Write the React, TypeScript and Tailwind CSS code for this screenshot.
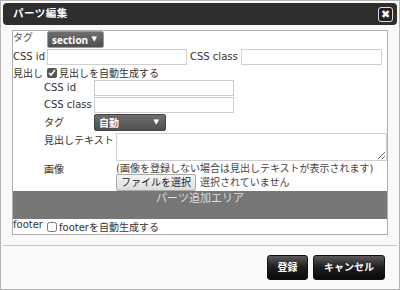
import React from 'react';

const font = { fontFamily: '"DejaVu Sans", "Noto Sans CJK JP", sans-serif' };

const DarkSelect: React.FC<{ label: string; width: string; focused?: boolean }> = ({ label, width, focused }) => (
  <div
    className={`${width} h-[17px] flex items-center justify-between pl-[4px] pr-[6px] rounded-[2px] bg-gradient-to-b from-[#6e6e6e] to-[#4f4f4f] text-white ${
      focused ? 'border border-[#7d9fd8]' : 'border border-[#444]'
    }`}
  >
    <span className="text-[10px] font-bold leading-none" style={{ fontFamily: '"Open Sans", "Noto Sans CJK JP", sans-serif' }}>
      {label}
    </span>
    <span className="text-[7px] leading-none">▼</span>
  </div>
);

const Input: React.FC<{ width: string }> = ({ width }) => (
  <input type="text" className={`${width} h-[16px] bg-white border border-[#cfcfcf] outline-none`} />
);

const App: React.FC = () => {
  return (
    <div className="w-[400px] h-[290px] bg-[#dcdcdc] overflow-hidden" style={font}>
      <div className="w-[400px] h-[290px] border border-[#b5b5b5] bg-[#f9f9f9] p-[2px] text-[#333] text-[10px]">
        {/* Title bar */}
        <div className="h-[22px] rounded-[4px] bg-[#2e2e2e] flex items-center justify-between pl-[10px] pr-[4px]">
          <span className="text-white font-bold text-[10.5px] tracking-[0.5px]">パーツ編集</span>
          <div className="w-[15px] h-[15px] rounded-[3px] border border-[#ddd] bg-[#222] flex items-center justify-center text-white font-bold text-[11px] leading-none">
            ✖
          </div>
        </div>

        {/* Form box */}
        <div className="mt-[5px] mx-[9px] border border-[#b0b0b0] bg-white leading-[13px]">
          <div className="flex h-[17px]">
            <span className="w-[34px] text-[#555]">タグ</span>
            <DarkSelect label="section" width="w-[57px]" focused />
          </div>
          <div className="flex h-[18px] items-start pt-[1px]">
            <span className="w-[34px] pt-[1px]">CSS id</span>
            <Input width="w-[140px]" />
            <span className="ml-[3px] w-[51px] pt-[1px]">CSS class</span>
            <Input width="w-[141px]" />
          </div>
          <div className="flex h-[14px] items-center">
            <span className="w-[34px]">見出し</span>
            <input type="checkbox" defaultChecked className="w-[10px] h-[10px] m-0 mr-[2px] accent-[#555]" />
            <span>見出しを自動生成する</span>
          </div>

          <div className="pl-[31px]">
            <div className="flex h-[17px] items-start">
              <span className="w-[50px] pt-[1px]">CSS id</span>
              <Input width="w-[140px]" />
            </div>
            <div className="flex h-[17px] items-start">
              <span className="w-[50px] pt-[1px]">CSS class</span>
              <Input width="w-[140px]" />
            </div>
            <div className="flex h-[18px] items-start">
              <span className="w-[50px] pt-[2px]">タグ</span>
              <DarkSelect label="自動" width="w-[72px]" />
            </div>
          </div>

          <div className="flex pl-[31px] mt-[1px]">
            <span className="w-[72px] pt-[1px]">見出しテキスト</span>
            <textarea className="flex-1 h-[28px] bg-white border border-[#cfcfcf] outline-none block" />
          </div>
          <div className="flex pl-[31px] mt-[2px]">
            <span className="w-[72px]">画像</span>
            <div className="flex flex-col">
              <span className="h-[11px] leading-[11px] text-[#444]">(画像を登録しない場合は見出しテキストが表示されます)</span>
              <div className="flex items-center h-[17px]">
                <div className="h-[17px] px-[4px] flex items-center border border-[#a9a9a9] rounded-[2px] bg-gradient-to-b from-[#f5f5f5] to-[#dcdcdc] text-[#222]">
                  ファイルを選択
                </div>
                <span className="ml-[4px] text-[#444]">選択されていません</span>
              </div>
            </div>
          </div>

          <div className="h-[28px] bg-[#777] text-[#ddd] text-center text-[11px] leading-[14px] pt-[1px]">パーツ追加エリア</div>

          <div className="flex h-[15px] items-start">
            <span className="w-[34px] leading-[12px]">footer</span>
            <input type="checkbox" className="w-[10px] h-[10px] m-0 mt-[3px] mr-[2px]" />
            <span className="pt-[2px]">footerを自動生成する</span>
          </div>
        </div>

        {/* Footer */}
        <div className="mt-[10px] border-t border-[#c4c4c4] flex justify-end gap-[5px] pt-[9px] pr-[12px]">
          <button className="h-[25px] w-[41px] rounded-[3px] border border-[#111] bg-gradient-to-b from-[#5a5a5a] via-[#1e1e1e] to-[#0a0a0a] text-white font-bold text-[10px]">
            登録
          </button>
          <button className="h-[25px] w-[72px] rounded-[3px] border border-[#111] bg-gradient-to-b from-[#5a5a5a] via-[#1e1e1e] to-[#0a0a0a] text-white font-bold text-[10px]">
            キャンセル
          </button>
        </div>
      </div>
    </div>
  );
};

export default App;
